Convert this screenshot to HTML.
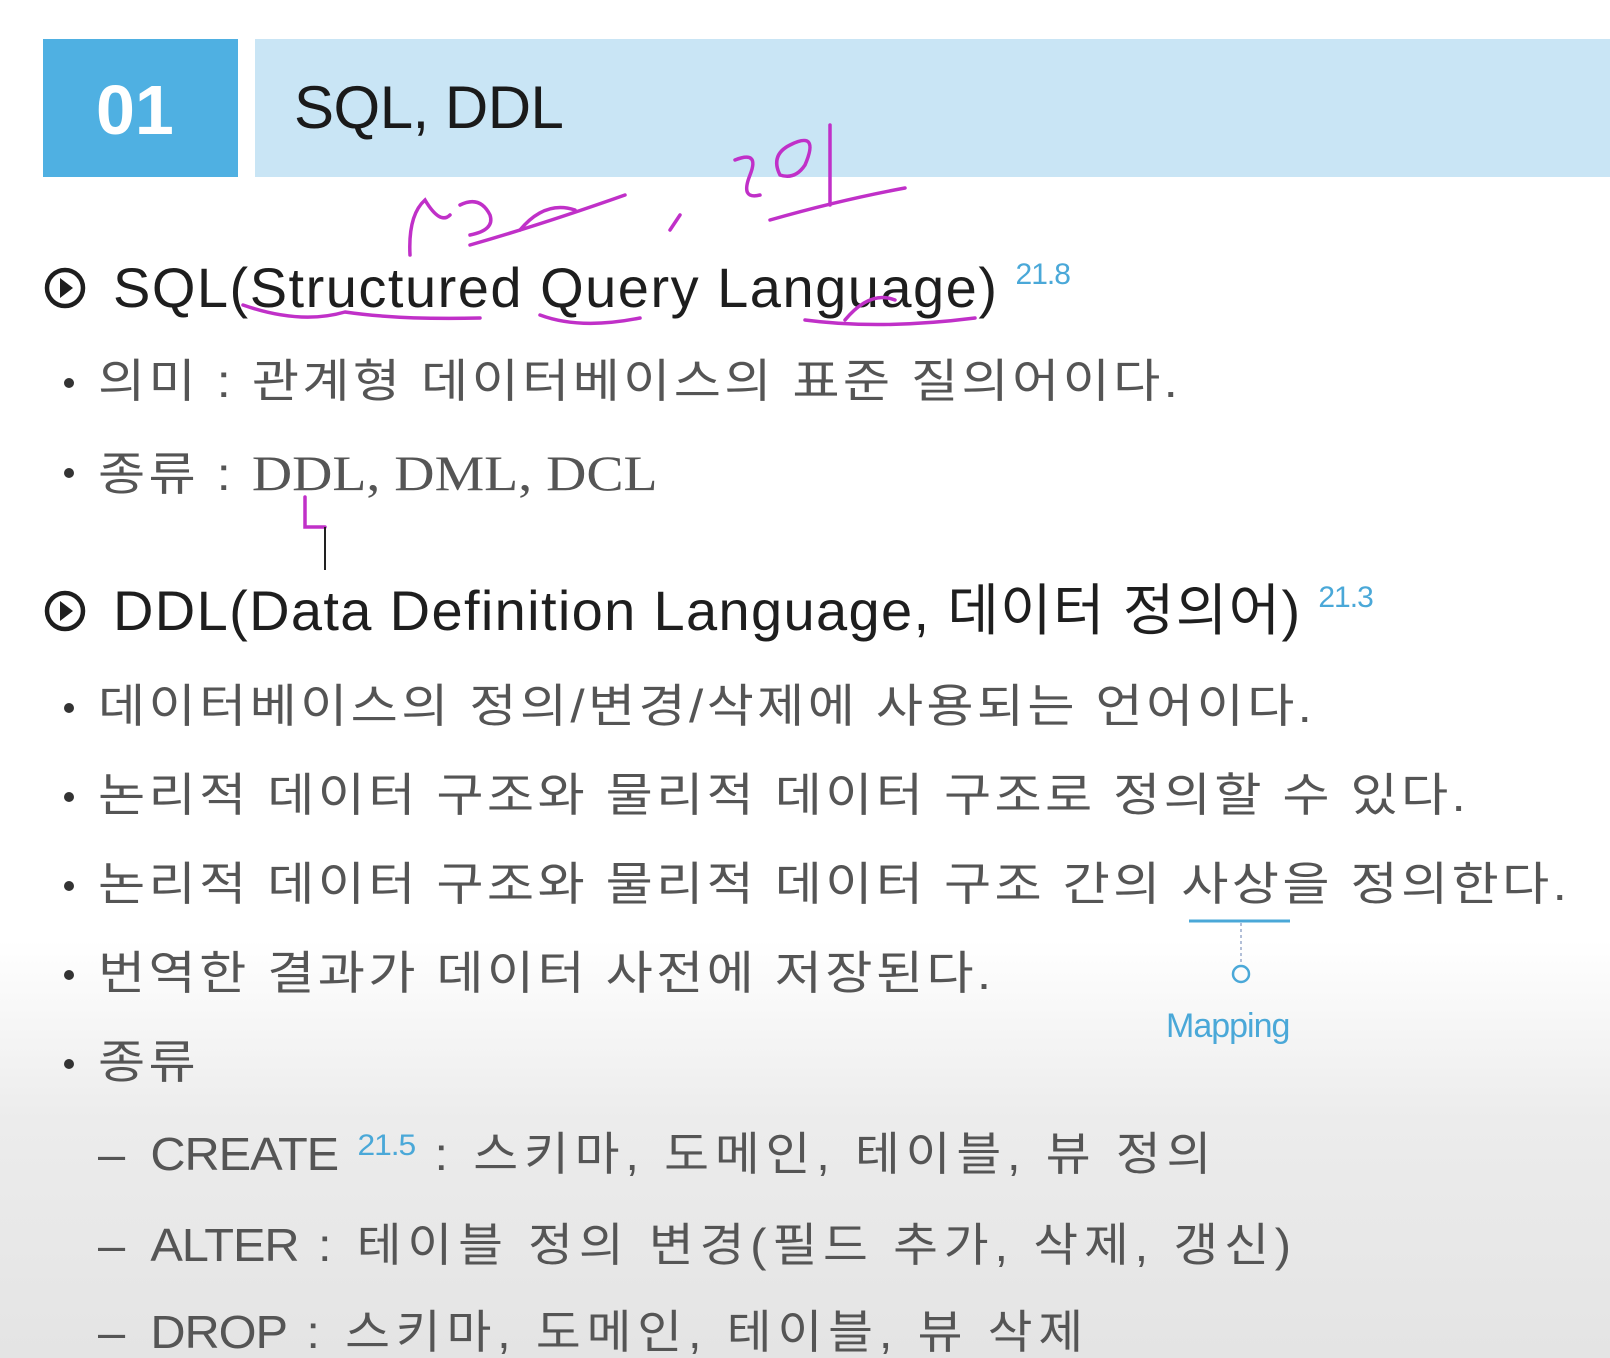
<!DOCTYPE html>
<html><head><meta charset="utf-8"><style>
body{margin:0;width:1610px;height:1358px;overflow:hidden;position:relative;
background:linear-gradient(#fff 0,#fff 940px,#ececec 1120px,#e4e4e4 1358px);
font-family:"Liberation Sans","Noto Sans CJK KR",sans-serif;}
.l{position:absolute;white-space:nowrap;line-height:1;}
.h{font-size:56px;color:#1e1e1e;left:113px}
.b{font-size:46px;color:#555;left:98px;letter-spacing:3px;transform:scaleX(1.115);transform-origin:left}
.d{font-size:46px;color:#555;left:98px;letter-spacing:5.5px;transform:scaleX(1.06);transform-origin:left}
.dot{position:absolute;left:64px;width:10px;height:10px;border-radius:50%;background:#333}
.sup{font-size:30px;color:#4aa8d8;vertical-align:top;letter-spacing:-1px}
.ic{position:absolute;left:44px;width:42px;height:42px}
.k{font-family:"Liberation Serif",serif;font-size:50px;letter-spacing:0px}
.e{letter-spacing:-1px}
</style></head><body>
<div style="position:absolute;left:43px;top:39px;width:195px;height:138px;background:#4fb0e2"></div>
<div style="position:absolute;left:255px;top:39px;width:1355px;height:138px;background:#c9e5f5"></div>
<div class="l" style="left:96px;top:75px;font-size:70px;font-weight:bold;color:#fff">01</div>
<div class="l" style="left:294px;top:78px;font-size:60px;color:#1a1a1a;letter-spacing:-0.5px">SQL, DDL</div>

<svg class="ic" style="top:267px" viewBox="0 0 42 42"><circle cx="21" cy="21" r="18" fill="none" stroke="#1e1e1e" stroke-width="4.5"/><path d="M16 11 L29 21 L16 31Z" fill="#1e1e1e"/></svg>
<div class="l h" style="top:260px;letter-spacing:1.5px">SQL(Structured Query Language) <span class="sup">21.8</span></div>

<div class="dot" style="top:378px"></div>
<div class="l b" style="top:358px">의미 : 관계형 데이터베이스의 표준 질의어이다.</div>
<div class="dot" style="top:468px"></div>
<div class="l b" style="top:448px">종류 : <span class="k">DDL, DML, DCL</span></div>

<svg class="ic" style="top:590px" viewBox="0 0 42 42"><circle cx="21" cy="21" r="18" fill="none" stroke="#1e1e1e" stroke-width="4.5"/><path d="M16 11 L29 21 L16 31Z" fill="#1e1e1e"/></svg>
<div class="l h" style="top:583px;letter-spacing:1.35px">DDL(Data Definition Language, 데이터 정의어) <span class="sup">21.3</span></div>

<div class="dot" style="top:703px"></div>
<div class="l b" style="top:683px">데이터베이스의 정의/변경/삭제에 사용되는 언어이다.</div>
<div class="dot" style="top:792px"></div>
<div class="l b" style="top:772px">논리적 데이터 구조와 물리적 데이터 구조로 정의할 수 있다.</div>
<div class="dot" style="top:881px"></div>
<div class="l b" style="top:861px">논리적 데이터 구조와 물리적 데이터 구조 간의 사상을 정의한다.</div>
<div class="dot" style="top:970px"></div>
<div class="l b" style="top:950px">번역한 결과가 데이터 사전에 저장된다.</div>
<div class="dot" style="top:1059px"></div>
<div class="l b" style="top:1039px">종류</div>

<div class="l d" style="top:1131px">– <span class="e">CREATE</span> <span class="sup">21.5</span> : 스키마, 도메인, 테이블, 뷰 정의</div>
<div class="l d" style="top:1222px">– <span class="e">ALTER</span> : 테이블 정의 변경(필드 추가, 삭제, 갱신)</div>
<div class="l d" style="top:1309px">– <span class="e">DROP</span> : 스키마, 도메인, 테이블, 뷰 삭제</div>

<svg style="position:absolute;left:0;top:0" width="1610" height="1358">
<line x1="1189" y1="921" x2="1290" y2="921" stroke="#4aa8d8" stroke-width="3"/>
<line x1="1241" y1="923" x2="1241" y2="966" stroke="#9ac" stroke-width="1.5" stroke-dasharray="3,3"/>
<circle cx="1241" cy="974" r="8" fill="none" stroke="#4aa8d8" stroke-width="2.5"/>
<text x="1166" y="1037" font-family="Liberation Sans" font-size="34" fill="#4aa8d8" letter-spacing="-1">Mapping</text>
<g fill="none" stroke="#c030c8" stroke-width="3.5" stroke-linecap="round">
<path d="M243 305 Q300 325 345 312 Q400 320 480 318"/>
<path d="M540 315 Q580 330 640 318"/>
<path d="M805 320 Q880 330 975 318"/>
<path d="M845 320 Q870 290 895 300"/>
<path d="M410 255 Q408 215 425 200 Q440 225 450 215"/>
<path d="M460 205 Q480 195 490 215 Q495 230 470 235"/>
<path d="M470 245 Q540 225 625 195"/>
<path d="M520 230 Q545 200 575 210"/>
<path d="M670 230 L680 215"/>
<path d="M735 160 Q760 150 750 175 Q740 200 760 195"/>
<path d="M790 145 Q820 130 805 165 Q795 180 780 175 Q770 155 790 145"/>
<path d="M830 125 L830 205"/>
<path d="M770 220 Q840 200 905 188"/>
<path d="M305 497 L305 527 L325 527"/>
</g>
<line x1="325" y1="527" x2="325" y2="570" stroke="#222" stroke-width="2"/>
</svg>
</body></html>
